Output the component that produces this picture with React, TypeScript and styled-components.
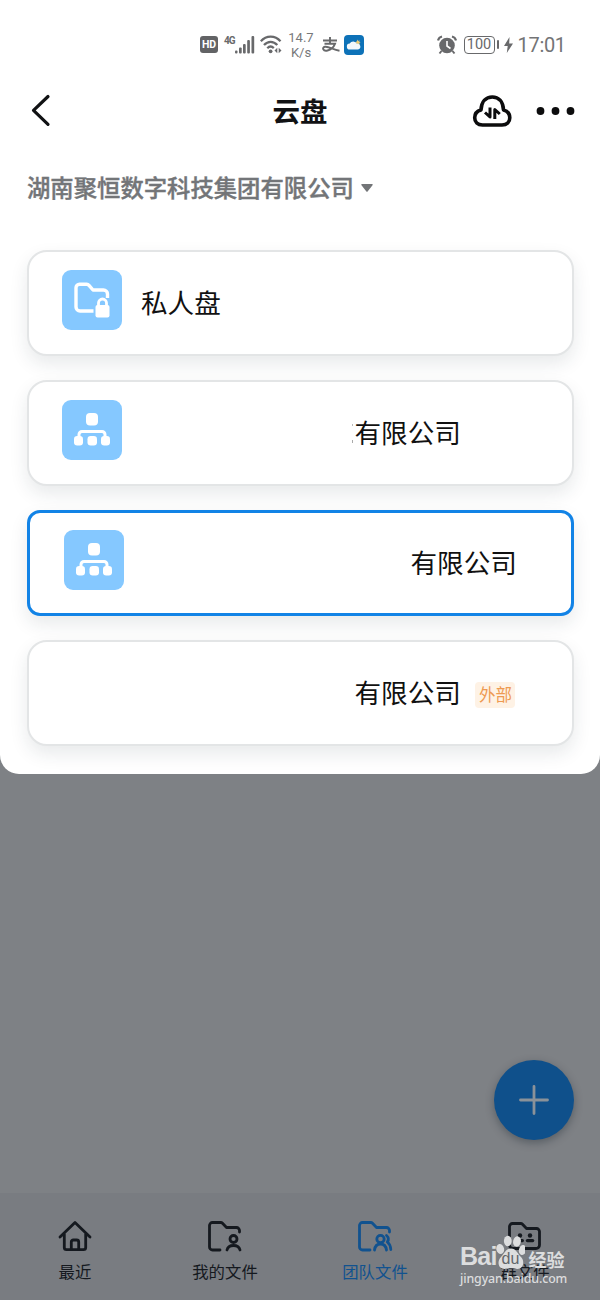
import React from 'react';
import styled, { createGlobalStyle } from 'styled-components';

const GlobalStyle = createGlobalStyle`
  * { box-sizing: border-box; }
  body {
    margin: 0;
    font-family: "Noto Sans CJK SC", sans-serif;
    background: #7e8186;
  }
  svg { display: block; flex: none; }
`;

const Screen = styled.div`
  position: relative;
  width: 600px;
  height: 1300px;
  display: flex;
  flex-direction: column;
  background: #7e8185;
  overflow: hidden;
`;

const Sheet = styled.section`
  height: 773.5px;
  flex: none;
  background: #fff;
  border-radius: 0 0 19px 19px;
`;

const StatusBar = styled.div`
  height: 78px;
  padding: 11px 34px 0 200px;
  display: flex;
  align-items: center;
  justify-content: space-between;
  color: #68696b;
`;

const StatusGroup = styled.div`
  display: flex;
  align-items: center;
`;

const HdBadge = styled.span`
  width: 18px;
  height: 17px;
  border-radius: 3px;
  background: #626365;
  color: #fff;
  font: 700 10.5px/17px Roboto, sans-serif;
  text-align: center;
`;

const Signal = styled.div`
  display: flex;
  margin-left: 6px;
  width: 31px;
`;

const NetType = styled.span`
  width: 11px;
  font: 700 10px/10px Roboto, sans-serif;
  letter-spacing: -0.9px;
`;

const Speed = styled.div`
  width: 26px;
  margin: 0 7px 0 5px;
  font: 400 13px/15px Roboto, sans-serif;
  color: #77787a;
  text-align: center;
  white-space: nowrap;
`;

const Battery = styled.span`
  width: 31px;
  height: 18px;
  margin-left: 7px;
  border: 1.5px solid #68696b;
  border-radius: 4px;
  font: 400 14.5px/16px Roboto, sans-serif;
  text-align: center;
`;

const BatteryTip = styled.span`
  width: 2px;
  height: 9px;
  margin: 0 5px 0 2px;
  border-radius: 1px;
  background: #68696b;
`;

const Clock = styled.span`
  width: 48.5px;
  margin-left: 5px;
  font: 400 20px/24px Roboto, sans-serif;
  color: #737476;
  letter-spacing: -0.3px;
  white-space: nowrap;
`;

const Header = styled.header`
  height: 66px;
  padding: 0 25px 0 31px;
  display: grid;
  grid-template-columns: 1fr auto 1fr;
  align-items: center;
`;

const Title = styled.h1`
  margin: -2px 6px 0 0;
  font-size: 27.5px;
  line-height: 40px;
  font-weight: 700;
  color: #111214;
`;

const HeaderActions = styled.div`
  display: flex;
  justify-content: flex-end;
  align-items: center;
  gap: 24.5px;
`;

const CompanyPicker = styled.div`
  height: 106px;
  padding: 25px 27px 0;
  display: flex;
  align-items: flex-start;
  gap: 7px;
  font-size: 23.35px;
  font-weight: 500;
  line-height: 36px;
  color: #737578;
  -webkit-text-stroke: 0.4px #737578;
  svg { margin-top: 15px; }
`;

const CardList = styled.div`
  padding: 0 26.5px;
  display: flex;
  flex-direction: column;
  gap: 24px;
`;

const Card = styled.article<{ $selected?: boolean }>`
  height: 106px;
  display: flex;
  align-items: flex-start;
  padding: ${(p) => (p.$selected ? '17px 0 0 34px' : '18px 0 0 33.5px')};
  border: ${(p) => (p.$selected ? '3px solid #1283e6' : '2px solid #e3e5e6')};
  border-radius: ${(p) => (p.$selected ? 13 : 20)}px;
  background: #fff;
  box-shadow: 0 8px 18px rgba(30, 45, 55, 0.1);
`;

const Tile = styled.span`
  width: 60px;
  height: 60px;
  flex: none;
  border-radius: 9px;
  background: #85c8ff;
`;

const CardName = styled.span<{ $indent: number; $clipped?: boolean }>`
  position: relative;
  margin: 11.5px 0 0 ${(p) => p.$indent}px;
  font-size: 26.6px;
  line-height: 40px;
  color: #111;
  white-space: nowrap;
  ${(p) =>
    p.$clipped &&
    `&::before {
      content: "";
      position: absolute;
      left: -2.5px;
      top: 12px;
      width: 1px;
      height: 19px;
      background: linear-gradient(#bbb 2px, transparent 2px 16px, #aaa 16px);
    }`}
`;

const Tag = styled.span`
  width: 40px;
  height: 26px;
  margin: 22px 0 0 14.5px;
  border-radius: 4px;
  background: #fef2e5;
  color: #ee9a51;
  font-size: 16.5px;
  line-height: 24px;
  text-align: center;
`;

const Backdrop = styled.main`
  flex: 1;
  display: flex;
  align-items: flex-end;
  justify-content: flex-end;
  padding: 0 26.5px 53px;
`;

const AddButton = styled.button`
  width: 80px;
  height: 80px;
  padding: 0;
  border: 0;
  border-radius: 50%;
  background: #0f508b;
  display: grid;
  place-items: center;
  box-shadow: 0 3px 8px rgba(30, 40, 50, 0.4);
`;

const TabBar = styled.nav`
  height: 107px;
  flex: none;
  display: grid;
  grid-template-columns: repeat(4, 150px);
  background: #797c81;
`;

const Tab = styled.div<{ $active?: boolean }>`
  display: flex;
  flex-direction: column;
  align-items: center;
  padding-top: 25px;
  color: ${(p) => (p.$active ? '#11528f' : '#15191f')};
  font-size: 16.4px;
  line-height: 24px;
  gap: 4.5px;
`;

const Watermark = styled.div`
  position: absolute;
  left: 460px;
  top: 1235px;
  width: 108px;
  color: #dcddde;
`;

const WatermarkBrand = styled.div`
  height: 36px;
  display: flex;
  align-items: flex-end;
  font: 700 25px/30px "Liberation Sans", sans-serif;
`;

const BrandWord = styled.span`
  width: 36px;
  letter-spacing: -0.7px;
  height: 26px;
  line-height: 22px;
`;

const Paw = styled.span`
  position: relative;
  width: 29px;
  height: 36px;
`;

const PawWord = styled.span`
  position: absolute;
  left: 0;
  top: 15px;
  width: 29px;
  color: #63666b;
  font: 400 16px/18px "Liberation Sans", sans-serif;
  text-align: center;
`;

const BrandSuffix = styled.span`
  margin-left: 3.5px;
  font: 700 18px/21px "Noto Sans CJK SC", sans-serif;
  height: 22px;
`;

const WatermarkUrl = styled.div`
  font: 500 12.4px/16px "Noto Sans", sans-serif;
  letter-spacing: -0.12px;
`;

const OrgIcon = () => (
  <svg width="60" height="60" viewBox="0 0 60 60" fill="#fff">
    <rect x="24" y="13" width="12" height="12.5" rx="4" />
    <path d="M17 38v-3.500a3 3 0 0 1 3-3h20a3 3 0 0 1 3 3V38" fill="none" stroke="#fff" strokeWidth="3" />
    <rect x="12" y="36" width="9" height="9.5" rx="3.2" />
    <rect x="25.5" y="36" width="9.5" height="9.5" rx="3.2" />
    <rect x="39" y="36" width="9" height="9.5" rx="3.2" />
  </svg>
);

const LockFolderIcon = () => (
  <svg width="60" height="60" viewBox="0 0 60 60" fill="none" stroke="#fff" strokeWidth="3.4" strokeLinejoin="round">
    <path d="M45.5 28v-4a4 4 0 0 0-4-4H31l-4-4.700a3 3 0 0 0-2.300-1.100H17.500a3.500 3.500 0 0 0-3.500 3.500V37a4 4 0 0 0 4 4h13.500" />
    <path d="M36.500 36v-3a4 4 0 0 1 8 0v3" strokeWidth="2.800" />
    <rect x="33.500" y="35" width="14" height="12.500" rx="2" fill="#fff" stroke="none" />
  </svg>
);

const folderOutline = 'M32.5 14v-1.500a3 3 0 0 0-3-3H19.500l-4-4.200a2.500 2.500 0 0 0-1.800-.8H5.500a3 3 0 0 0-3 3V29a3 3 0 0 0 3 3H13';

const TabIcon = ({ kind }: { kind: string }) => (
  <svg width="36" height="36" viewBox="0 0 36 36" fill="none" stroke="currentColor" strokeWidth="2.800" strokeLinecap="round" strokeLinejoin="round">
    {kind === 'home' && (
      <>
        <path d="M3 19 18 4.500 33 19M7.300 16v13.500a2.200 2.200 0 0 0 2.200 2.200h17a2.200 2.200 0 0 0 2.200-2.200V16" />
        <path d="M14.300 31v-7a2 2 0 0 1 2-2h3.400a2 2 0 0 1 2 2v7" />
      </>
    )}
    {kind === 'mine' && (
      <>
        <path d={folderOutline} />
        <circle cx="26.500" cy="21" r="3.500" />
        <path d="M20 32c1.300-6 11.700-6 13 0" />
      </>
    )}
    {kind === 'team' && (
      <>
        <path d={folderOutline} />
        <circle cx="23.500" cy="21" r="3.700" />
        <path d="M17.500 32c.5-3.800 3-6 6-6s5.500 2.200 6 6M29.500 17.500c2 1.700 2.400 4.300.8 6.500 2.200 1.700 3.300 4.300 3.500 7.500" />
      </>
    )}
    {kind === 'group' && (
      <>
        <path d="M5.500 5.500h8.200a2.500 2.500 0 0 1 1.800.8l4 4.200h10a3 3 0 0 1 3 3V27a3.500 3.500 0 0 1-3.500 3.500H6A3.500 3.500 0 0 1 2.500 27V8.500a3 3 0 0 1 3-3Z" />
        <g fill="currentColor" stroke="none">
          <circle cx="13" cy="17.500" r="2.200" />
          <circle cx="23" cy="17.500" r="2.200" />
          <rect x="8.500" y="21" width="8.500" height="3.200" rx="1.600" />
          <rect x="18.800" y="21" width="8.500" height="3.200" rx="1.600" />
        </g>
      </>
    )}
  </svg>
);

const SignalBars = () => (
  <svg width="20" height="18" viewBox="0 0 20 18" fill="currentColor">
    <rect x="0" y="14.500" width="2.500" height="3" rx="1" />
    <rect x="4" y="11.500" width="2.700" height="6" rx="1" />
    <rect x="8" y="8" width="2.700" height="9.500" rx="1" />
    <rect x="12.200" y="4" width="2.700" height="13.500" rx="1" />
    <rect x="16.500" y="0" width="2.700" height="17.500" rx="1" />
  </svg>
);

const WifiSvg = styled.svg`
  margin-left: 5px;
`;

const WifiIcon = () => (
  <WifiSvg width="23" height="19" viewBox="0 0 23 19" fill="none" stroke="currentColor" strokeWidth="2.300">
    <path d="M.8 6.300c5.500-6.200 14.200-6.200 19.700 0M4 10c4-4.300 9.300-4.300 13.300 0M7.300 13.300c2-2.100 4.500-2.100 6.500-.2" />
    <circle cx="10.600" cy="16.300" r="1.900" fill="currentColor" stroke="none" />
    <path d="M17.300 12.800v5.400L14.500 15.500ZM18.700 12.800v5.400l2.800-2.700Z" fill="currentColor" stroke="none" />
  </WifiSvg>
);

const PaySvg = styled.svg`
  margin-right: 4px;
`;

const PayIcon = () => (
  <PaySvg width="19" height="17" viewBox="0 0 19 17" fill="none" stroke="currentColor" strokeWidth="1.900">
    <path d="M2 4.500h14M9 1v6.500M3.500 7.800h10.500c-1.500 3.700-4.500 6-7.500 6.700-4.500 1-6-3-2.500-3.700 4-.6 7.500 2.700 14.500 4" />
  </PaySvg>
);

const WeatherIcon = () => (
  <svg width="20" height="20" viewBox="0 0 20 20">
    <rect width="20" height="20" rx="4" fill="#0d72b8" />
    <path d="m13.500 4.500.6 1.400 1.400-.7-.2 1.500 1.300.6-1.300.8.4 1.500-3-.8-1.500-1.500 1.500-.8Z" fill="#e8c977" />
    <path d="M6 14.500a3 3 0 0 1-.3-6 4 4 0 0 1 7.200.3 2.900 2.900 0 0 1 1.100 5.700Z" fill="#f3f8fb" />
  </svg>
);

const AlarmIcon = () => (
  <svg width="20" height="20" viewBox="0 0 20 20" fill="none" stroke="currentColor">
    <circle cx="10" cy="10.500" r="7.800" fill="currentColor" stroke="none" />
    <path d="M1 5.500C1.500 3.500 3 2 5 1.500M19 5.500C18.500 3.500 17 2 15 1.500" strokeWidth="2.200" />
    <path d="m4.500 16-2 2.500M15.500 16l2 2.500" strokeWidth="2" />
    <path d="M10 6v5l3.500 2.500" stroke="#fff" strokeWidth="1.600" />
  </svg>
);

const BoltIcon = () => (
  <svg width="9" height="16" viewBox="0 0 9 16" fill="currentColor">
    <path d="M5.500 0 0 9h3.700L2.800 16 9 6.500H5.200Z" />
  </svg>
);

const BackIcon = () => (
  <svg width="20" height="34" viewBox="0 0 20 34" fill="none" stroke="#111214" strokeWidth="3.200" strokeLinecap="round" strokeLinejoin="round">
    <path d="M17 2.500 2.500 16.300 17 30.300" />
  </svg>
);

const CloudSyncIcon = () => (
  <svg width="40" height="33" viewBox="0 0 40 33" fill="none" stroke="#0c0c0d" strokeWidth="3.600" strokeLinejoin="round" strokeLinecap="round">
    <path d="M10.500 30C5.500 30 2.700 27 2.700 22.800c0-3.900 2.400-6.800 6.300-7.800C9.500 6.500 14 2 20.300 2S31 6.500 31.500 15c3.900 1 6.300 3.900 6.300 7.800 0 4.200-2.800 7.200-7.800 7.200Z" />
    <path d="M18 12.500v9.500l-5-4.500M22.800 24v-9.500l5 4.500" strokeWidth="3" strokeLinecap="butt" />
  </svg>
);

const MoreIcon = () => (
  <svg width="39" height="8" viewBox="0 0 39 8" fill="#0c0c0d">
    <circle cx="4.500" cy="4" r="3.900" />
    <circle cx="19.500" cy="4" r="3.900" />
    <circle cx="34.500" cy="4" r="3.900" />
  </svg>
);

const drives = [
  { name: '私人盘', icon: 'lock', indent: 19 },
  { name: '有限公司', icon: 'org', indent: 232.5, clipped: true },
  { name: '有限公司', icon: 'org', indent: 287, selected: true },
  { name: '有限公司', icon: '', indent: 292.5, tag: '外部' },
];

const tabs = [
  { kind: 'home', label: '最近' },
  { kind: 'mine', label: '我的文件' },
  { kind: 'team', label: '团队文件', active: true },
  { kind: 'group', label: '群文件' },
];

export default function App() {
  return (
    <Screen>
      <GlobalStyle />
      <Sheet>
        <StatusBar>
          <StatusGroup>
            <HdBadge>HD</HdBadge>
            <Signal>
              <NetType>4G</NetType>
              <SignalBars />
            </Signal>
            <WifiIcon />
            <Speed>14.7<br />K/s</Speed>
            <PayIcon />
            <WeatherIcon />
          </StatusGroup>
          <StatusGroup>
            <AlarmIcon />
            <Battery>100</Battery>
            <BatteryTip />
            <BoltIcon />
            <Clock>17:01</Clock>
          </StatusGroup>
        </StatusBar>
        <Header>
          <BackIcon />
          <Title>云盘</Title>
          <HeaderActions>
            <CloudSyncIcon />
            <MoreIcon />
          </HeaderActions>
        </Header>
        <CompanyPicker>
          湖南聚恒数字科技集团有限公司
          <svg width="12" height="8" viewBox="0 0 12 8" fill="#737578"><path d="M1 0h10c.8 0 1 .8.500 1.300L6.800 7.200a1 1 0 0 1-1.600 0L.5 1.300C0 .8.200 0 1 0Z" /></svg>
        </CompanyPicker>
        <CardList>
          {drives.map((d, i) => (
            <Card key={i} $selected={d.selected}>
              {d.icon && <Tile>{d.icon === 'lock' ? <LockFolderIcon /> : <OrgIcon />}</Tile>}
              <CardName $indent={d.indent} $clipped={d.clipped}>{d.name}</CardName>
              {d.tag && <Tag>{d.tag}</Tag>}
            </Card>
          ))}
        </CardList>
      </Sheet>
      <Backdrop>
        <AddButton aria-label="新建">
          <svg width="30" height="30" viewBox="0 0 30 30" fill="none" stroke="#8b9299" strokeWidth="2.800" strokeLinecap="round">
            <path d="M15 1.500v27M1.500 15h27" />
          </svg>
        </AddButton>
      </Backdrop>
      <TabBar>
        {tabs.map((t) => (
          <Tab key={t.kind} $active={t.active}>
            <TabIcon kind={t.kind} />
            {t.label}
          </Tab>
        ))}
      </TabBar>
      <Watermark>
        <WatermarkBrand>
          <BrandWord>Bai</BrandWord>
          <Paw>
            <svg width="29" height="36" viewBox="0 0 29 36" fill="currentColor">
              <ellipse cx="4.200" cy="14" rx="3.900" ry="5" transform="rotate(-12 4.200 14)" />
              <ellipse cx="11.800" cy="6" rx="3.900" ry="5.200" />
              <ellipse cx="21" cy="6.500" rx="3.900" ry="5.200" transform="rotate(12 21 6.500)" />
              <ellipse cx="26.500" cy="15" rx="3.600" ry="5" transform="rotate(12 26.500 15)" />
              <path d="M15 13.500c5 0 6.500 5 10 8.500 4 4 2.500 12-3.500 12-2.500 0-4-.7-6.500-.7S11 34 8.500 34C2 34 .8 26 5 22c3.500-3.500 5-8.500 10-8.500Z" />
            </svg>
            <PawWord>du</PawWord>
          </Paw>
          <BrandSuffix>经验</BrandSuffix>
        </WatermarkBrand>
        <WatermarkUrl>jingyan.baidu.com</WatermarkUrl>
      </Watermark>
    </Screen>
  );
}
